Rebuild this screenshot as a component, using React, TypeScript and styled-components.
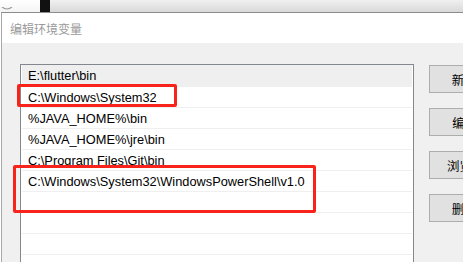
import React from "react";
import styled, {createGlobalStyle} from "styled-components";

const GlobalStyle = createGlobalStyle`
  html, body {
    margin: 0;
    padding: 0;
    background: #ffffff;
    overflow: hidden;
  }
  body {
    font-family: "Liberation Sans", "Noto Sans CJK SC", sans-serif;
    font-size: 12px;
  }
`;

const Screen = styled.div`
  position: relative;
  width: 463px;
  height: 262px;
  overflow: hidden;
  display: flex;
  flex-direction: column;
`;

const TopStrip = styled.div`
  display: flex;
  height: 12px;
  flex-shrink: 0;
`;

const BehindWindow = styled.div`
  width: 40px;
  background: linear-gradient(#ffffff, #f4f4f4);
`;

const BlackBlock = styled.div`
  width: 10px;
  background: #111111;
`;

const TaskStrip = styled.div`
  flex: 1;
  background: linear-gradient(#f0f0f0, #d9d9d9);
`;

const Dialog = styled.div`
  flex: 1;
  display: flex;
  flex-direction: column;
  margin-left: 1px;
  border-top: 1px solid #8c8c8c;
  border-left: 1px solid #a8a8a8;
  background: #f0f0f0;
`;

const TitleBar = styled.div`
  height: 30px;
  display: flex;
  align-items: center;
  padding-left: 8px;
  background: #ffffff;
  color: #9a9a9a;
  font-family: "Noto Sans CJK SC", sans-serif;
  font-size: 12px;
`;

const Body = styled.div`
  flex: 1;
  display: flex;
  padding: 21px 0 0 18px;
`;

const ListBox = styled.div`
  width: 390px;
  height: 220px;
  flex-shrink: 0;
  border: 1px solid #828790;
  border-bottom: none;
  background: #ffffff;
  padding: 0 1px;
`;

const Row = styled.div<{ $selected?: boolean; $first?: boolean }>`
  height: ${p => (p.$first ? 21 : 20)}px;
  display: flex;
  align-items: center;
  padding-left: 6px;
  border-top: ${p => (p.$first ? "none" : "1px solid #efefef")};
  background: ${p => (p.$selected ? "#efefef" : "#ffffff")};
  color: #000000;
  font-size: 12.8px;
  white-space: nowrap;
`;

const ButtonColumn = styled.div`
  display: flex;
  flex-direction: column;
  gap: 15px;
  margin-left: 15px;
  padding-top: 1px;
`;

const DialogButton = styled.div<{ $gapBefore?: number }>`
  width: 86px;
  height: 26px;
  flex-shrink: 0;
  margin-top: ${p => p.$gapBefore ?? 0}px;
  display: flex;
  align-items: center;
  justify-content: center;
  border: 1px solid #adadad;
  background: #e1e1e1;
  color: #000000;
  font-size: 12.5px;
  white-space: nowrap;
`;

const Highlight = styled.div`
  position: absolute;
  border: 3px solid #f8231b;
  border-radius: 2px;
  box-sizing: border-box;
`;

const paths = [
  "E:\\flutter\\bin",
  "C:\\Windows\\System32",
  "%JAVA_HOME%\\bin",
  "%JAVA_HOME%\\jre\\bin",
  "C:\\Program Files\\Git\\bin",
  "C:\\Windows\\System32\\WindowsPowerShell\\v1.0",
  "",
  "",
  "",
  "",
];

const buttons = [
  {label: "新建(N)", gap: 0},
  {label: "编辑(E)", gap: 0},
  {label: "浏览(B)...", gap: 0},
  {label: "删除(D)", gap: 0},
  {label: "上移(U)", gap: 34},
];

const App: React.FC = () => {
  return (
    <Screen>
      <GlobalStyle/>
      <TopStrip>
        <BehindWindow>
          <svg width="14" height="4" viewBox="0 0 14 4">
            <path d="M2 0 Q7 4 12 0" stroke="#9a9a9a" strokeWidth="1.2" fill="none"/>
          </svg>
        </BehindWindow>
        <BlackBlock/>
        <TaskStrip/>
      </TopStrip>
      <Dialog>
        <TitleBar>编辑环境变量</TitleBar>
        <Body>
          <ListBox>
            {paths.map((p, i) => (
              <Row key={i} $first={i === 0} $selected={i === 0}>{p}</Row>
            ))}
          </ListBox>
          <ButtonColumn>
            {buttons.map(b => (
              <DialogButton key={b.label} $gapBefore={b.gap}>{b.label}</DialogButton>
            ))}
          </ButtonColumn>
        </Body>
      </Dialog>
      <Highlight style={{left: 17, top: 84, width: 160, height: 23}}/>
      <Highlight style={{left: 13, top: 165, width: 303, height: 48}}/>
    </Screen>
  );
};

export default App;
